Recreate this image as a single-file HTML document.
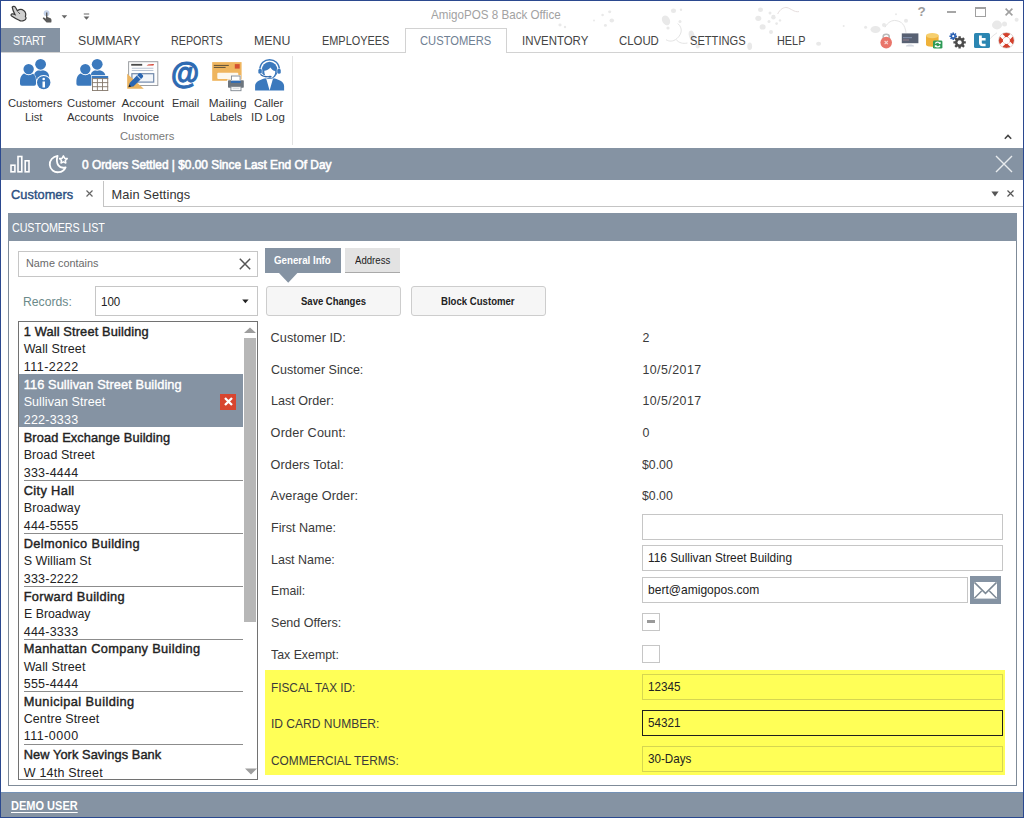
<!DOCTYPE html>
<html>
<head>
<meta charset="utf-8">
<title>AmigoPOS 8 Back Office</title>
<style>
*{box-sizing:border-box;margin:0;padding:0}
html,body{width:1024px;height:818px;overflow:hidden;background:#fff;font-family:"Liberation Sans",sans-serif;color:#222}
.a{position:absolute}
.t{position:absolute;white-space:nowrap;line-height:1;transform-origin:0 0}
svg{position:absolute;overflow:visible}
</style>
</head>
<body>
<!-- window frame -->
<div class="a" style="left:0;top:0;width:1024px;height:818px;border:1px solid #2b498f"></div>

<!-- title bar decoration -->
<svg id="deco" style="left:0;top:0" width="1024" height="53" viewBox="0 0 1024 53">
<g fill="#e9e9e9" stroke="none">
<ellipse cx="594" cy="20.4" rx="1" ry="1"/><ellipse cx="602.6" cy="15" rx="1.3" ry="1.3"/><ellipse cx="609.7" cy="11.8" rx="1.6" ry="1.4"/><ellipse cx="611.8" cy="20.4" rx="2.3" ry="2"/><ellipse cx="605.4" cy="25.4" rx="1.5" ry="1.4"/><ellipse cx="673.5" cy="10.7" rx="2.6" ry="2.2"/><ellipse cx="681" cy="9.7" rx="1.2" ry="1.2"/><ellipse cx="668" cy="28" rx="1.6" ry="1.6"/><ellipse cx="680" cy="21.5" rx="1.5" ry="1.5"/><ellipse cx="697.7" cy="46.2" rx="2" ry="2.2"/><ellipse cx="749.7" cy="46.2" rx="2.4" ry="3.8"/><ellipse cx="760.5" cy="9.7" rx="2.5" ry="2.2"/><ellipse cx="758.3" cy="18.3" rx="3" ry="2.6"/><ellipse cx="762.6" cy="26.9" rx="3" ry="2.6"/><ellipse cx="770" cy="12.9" rx="1.5" ry="1.5"/><ellipse cx="773.4" cy="17.2" rx="2.2" ry="2.4"/><ellipse cx="769" cy="21.5" rx="1.5" ry="1.5"/><ellipse cx="776.6" cy="23.6" rx="1.3" ry="1.3"/><ellipse cx="771" cy="32" rx="2" ry="2"/><ellipse cx="780" cy="20.4" rx="1.2" ry="1.2"/><ellipse cx="875.5" cy="29.5" rx="5" ry="3.5"/><ellipse cx="865.6" cy="27.3" rx="1.5" ry="1.5"/><ellipse cx="884" cy="25" rx="2" ry="2"/><ellipse cx="906" cy="20.8" rx="2" ry="2"/><ellipse cx="896" cy="14.2" rx="1" ry="1"/><ellipse cx="997" cy="25" rx="5" ry="4.4"/><ellipse cx="1004.5" cy="24" rx="2.5" ry="2.5"/><ellipse cx="1016.6" cy="19.7" rx="2" ry="2"/><ellipse cx="818.6" cy="43.7" rx="2.5" ry="2"/><ellipse cx="843.7" cy="26" rx="1" ry="1"/><ellipse cx="560" cy="25" rx="1.6" ry="1.4"/><ellipse cx="565" cy="27" rx="1.2" ry="1.2"/>
<ellipse cx="666" cy="20.4" rx="3.8" ry="5.2" transform="rotate(-30 666 20.4)"/>
<ellipse cx="691.7" cy="35.5" rx="2.8" ry="5" transform="rotate(-15 691.7 35.5)"/>
</g>
<g fill="none" stroke="#e4e4e4" stroke-width="1">
<path d="M677.8 23.6 C683 28 682 34 677 38.5 C673 42 669 41.5 666 39.7"/>
<path d="M676 39.5 C679 43 683 44 687.4 43"/>
<path d="M777.7 14 C780 9 784 7 787 7.6 C791 8.4 794 12.5 799 11.6" stroke="#e6dede"/>
<path d="M885 27.3 C888 22 892 20 896 20.6 C902 21.5 905 25 906 32.8"/>
<path d="M986 43.7 C989 39 993 35.5 997 32.8"/>
</g>
</svg>

<!-- quick access icons -->
<svg style="left:10px;top:5px" width="18" height="18" viewBox="0 0 18 18">
<path d="M2.2 2.2 C3.2 0.8 5 1.2 5.6 2.6 L7.4 5.8 C9 4.6 11.6 4 13.6 5.4 C15.6 6.8 16 9.6 15.4 11.6 C16.6 12.6 16 14.6 14.4 15.2 C12.8 16 10.4 16.2 9.2 15.2 C7 14.2 3.6 12.4 1.6 11 C0.4 10.2 1.2 8.6 2.6 8.8 L5 9.6 C3.8 7.4 2.6 5.2 2.2 2.2 Z" fill="#d0d0d0" stroke="#383838" stroke-width="1.2"/>
<path d="M8 6.8 L10 9" stroke="#444" stroke-width="0.9" fill="none"/>
</svg>
<svg style="left:42px;top:10px" width="11" height="14" viewBox="0 0 11 14">
<circle cx="4.6" cy="3.2" r="2.9" fill="#c5d3ea"/>
<path d="M4 2.6 L5.4 2.6 L5.4 7 L8.6 8.2 C9.6 8.8 9.8 10.6 9.2 12.6 L4.6 12.6 L0.8 8.6 C0.6 7.6 1.6 7.2 2.4 7.8 L4 8.8 Z" fill="#5a5a5a"/>
</svg>
<svg style="left:61px;top:15px" width="7" height="4" viewBox="0 0 7 4"><path d="M0.6 0.2 L6.2 0.2 L3.4 3.4 Z" fill="#666"/></svg>
<svg style="left:83px;top:13px" width="7" height="8" viewBox="0 0 7 8"><path d="M0.8 0.4 H6.2 V1.6 H0.8 Z M0.6 3.4 L6.4 3.4 L3.5 6.8 Z" fill="#666"/></svg>

<!-- window controls -->
<div class="t" style="left:917.6px;top:5.4px;font-size:13.4px;font-weight:bold;color:#9c9c9c">?</div>
<div class="a" style="left:947px;top:11px;width:9px;height:2px;background:#a6a6a6"></div>
<div class="a" style="left:975px;top:7px;width:11px;height:10px;border:1px solid #a0a0a0;border-top-width:2px"></div>
<svg style="left:1005px;top:8px" width="8" height="8" viewBox="0 0 8 8"><path d="M0.6 0.6 L7.4 7.4 M7.4 0.6 L0.6 7.4" stroke="#a0a0a0" stroke-width="1.6"/></svg>

<!-- small right icons -->
<!-- lock -->
<svg style="left:880px;top:32px" width="13" height="17" viewBox="0 0 13 17">
<path d="M3.2 7 V4.6 C3.2 1.4 9.2 1.4 9.2 4.6 V7" fill="none" stroke="#b9b9b9" stroke-width="1.6"/>
<circle cx="6.2" cy="10.6" r="5.8" fill="#e9756a"/>
<path d="M4.6 9 L7.8 12.2 M7.8 9 L4.6 12.2" stroke="#f8d6d2" stroke-width="1.1"/>
</svg>
<!-- monitor -->
<svg style="left:901px;top:33px" width="18" height="15" viewBox="0 0 18 15">
<rect x="0.8" y="0.4" width="16.6" height="9.8" fill="#586173"/>
<rect x="2" y="4" width="9" height="1.2" fill="#7d8aa5"/><rect x="2" y="6.4" width="6" height="1.2" fill="#8a7a86"/>
<path d="M5 12.6 C7 11 11 11 13 12.6 L13 13.6 L5 13.6 Z" fill="#d5dae2"/>
</svg>
<!-- database -->
<svg style="left:925px;top:32px" width="18" height="17" viewBox="0 0 18 17">
<path d="M1 3.6 V12.8 C1 15.4 13.6 15.4 13.6 12.8 V3.6 Z" fill="#efb23a"/>
<ellipse cx="7.3" cy="3.6" rx="6.3" ry="2.6" fill="#f6cf6e"/>
<rect x="8" y="8.4" width="9.4" height="8.2" rx="1.4" fill="#2f9b57"/>
<path d="M10.4 11.6 C11 9.8 14 9.6 15 11.4 M15 13.6 C14.2 15.2 11.4 15.4 10.4 13.8" fill="none" stroke="#fff" stroke-width="1.3"/>
<path d="M15.6 9.8 V12 H13.4 Z M9.8 15.4 V13.2 H12 Z" fill="#fff"/>
</svg>
<!-- gears -->
<svg style="left:949px;top:32px" width="18" height="17" viewBox="0 0 18 17">
<g fill="#2e63b4"><circle cx="4.2" cy="4.2" r="2.6"/><path d="M3.4 0.4h1.6v7.6H3.4z M0.4 3.4h7.6v1.6H0.4z"/><path d="M1 2.1L2.1 1l5.4 5.4L6.4 7.5z M6.4 1l1.1 1.1L2.1 7.5 1 6.4z"/></g>
<circle cx="4.2" cy="4.2" r="1.1" fill="#fff"/>
<g fill="#4b4b4b"><circle cx="10.6" cy="10.4" r="4.6"/><path d="M9.4 4.2h2.4v12.4H9.4z M4.4 9.2h12.4v2.4H4.4z"/><path d="M5.4 6.9L7.1 5.2l8.8 8.8-1.7 1.7z M14.2 5.2l1.7 1.7-8.8 8.8-1.7-1.7z"/></g>
<circle cx="10.6" cy="10.4" r="2.1" fill="#fff"/>
</svg>
<!-- twitter -->
<svg style="left:974px;top:33px" width="16" height="15" viewBox="0 0 16 15">
<rect x="0" y="0" width="16" height="15" rx="1.6" fill="#2b86b2"/>
<path d="M5 2.4 H7.8 V5 H11.6 V7.6 H7.8 V9.4 C7.8 10.4 8.4 10.8 9.4 10.8 H11.6 V13.2 H8.6 C6.2 13.2 5 12 5 9.8 Z" fill="#fff"/>
</svg>
<!-- lifebuoy -->
<svg style="left:998px;top:32px" width="17" height="17" viewBox="0 0 17 17">
<circle cx="8.4" cy="8.4" r="5.6" fill="none" stroke="#d4412d" stroke-width="4.2"/>
<g stroke="#fff" stroke-width="3.6" transform="rotate(45 8.4 8.4)"><path d="M8.4 0.4V4.8 M8.4 12V16.4 M0.4 8.4H4.8 M12 8.4H16.4"/></g>
<circle cx="8.4" cy="8.4" r="7.8" fill="none" stroke="#c7b3ae" stroke-width="0.5"/>
</svg>

<!-- ribbon tab row -->
<div class="a" style="left:1px;top:28px;width:59px;height:25px;background:#8593a3"></div>
<div class="a" style="left:1px;top:52px;width:1022px;height:1px;background:#d2d2d2"></div>
<div class="a" style="left:405px;top:28px;width:102px;height:25px;border:1px solid #d2d2d2;border-bottom:none;background:#fff"></div>

<!-- ribbon icons -->
<!-- customers list -->
<svg style="left:19px;top:58px" width="33" height="33" viewBox="0 0 33 33">
<path d="M15 21.4 L15 18.6 C15 14.4 17.6 12.1 21.6 12.1 C26.4 12.1 30.2 14.4 30.2 19.4 L30.2 21.4 Z" fill="#3b79bd"/>
<circle cx="21.6" cy="6.3" r="6.4" fill="#fff"/>
<circle cx="21.6" cy="6.3" r="5.4" fill="#3b79bd"/>
<path d="M1 25.8 L1 23 C1 17.6 4.2 14.4 9.65 14.4 C14.6 14.4 17 17.6 17 23 L17 25.8 Q17 27.7 15.2 27.7 L2.8 27.7 Q1 27.7 1 25.8 Z" fill="#3b79bd" stroke="#fff" stroke-width="1" paint-order="stroke"/>
<circle cx="9.65" cy="11.1" r="6.2" fill="#fff"/>
<circle cx="9.65" cy="11.1" r="5.2" fill="#3b79bd"/>
<circle cx="24.7" cy="24.6" r="7.7" fill="#fff"/>
<circle cx="24.7" cy="24.6" r="6.7" fill="#3b79bd"/>
<rect x="23.5" y="23.5" width="2.5" height="6" fill="#fff"/><circle cx="24.7" cy="21" r="1.3" fill="#fff"/>
</svg>
<!-- customer accounts -->
<svg style="left:76px;top:58px" width="33" height="33" viewBox="0 0 33 33">
<path d="M14.6 21.4 L14.6 18.6 C14.6 14.4 17.2 12.1 21.2 12.1 C26 12.1 29.6 14.4 29.6 19.4 L29.6 21.4 Z" fill="#3b79bd"/>
<circle cx="21.2" cy="6.3" r="6.4" fill="#fff"/>
<circle cx="21.2" cy="6.3" r="5.4" fill="#3b79bd"/>
<path d="M0.4 25.8 L0.4 23 C0.4 17.6 3.6 14.4 9.3 14.4 C14.2 14.4 16.6 17.6 16.6 23 L16.6 25.8 Q16.6 27.7 14.8 27.7 L2.2 27.7 Q0.4 27.7 0.4 25.8 Z" fill="#3b79bd" stroke="#fff" stroke-width="1" paint-order="stroke"/>
<circle cx="9.3" cy="11.1" r="6.2" fill="#fff"/>
<circle cx="9.3" cy="11.1" r="5.2" fill="#3b79bd"/>
<rect x="15.4" y="17.2" width="17.4" height="16.2" fill="#fff"/>
<rect x="16.4" y="18" width="15.6" height="14.6" fill="#fff"/>
<rect x="16" y="18" width="16.2" height="2.6" fill="#3b79bd"/>
<path d="M16.5 20.4V32.9 M21.4 20.4V32.9 M26.5 20.4V32.9 M31.7 20.4V32.9 M16 20.6H32.2 M16 24.6H32.2 M16 28.7H32.2 M16 32.5H32.2" stroke="#85786c" stroke-width="0.9" fill="none"/>
</svg>
<!-- account invoice -->
<svg style="left:127px;top:60px" width="32" height="30" viewBox="0 0 32 30">
<rect x="1.6" y="1.7" width="29.2" height="23.8" fill="#fdfdfd" stroke="#9c9fa3" stroke-width="1"/>
<rect x="4.2" y="3.9" width="11" height="1.8" fill="#4a4a4a"/>
<path d="M19.6 5.6 L21.2 4.4 L27 3.9 L26.4 5.6 Z" fill="#d13a2a"/>
<rect x="4.8" y="7.8" width="21.6" height="0.8" fill="#a9b6c8"/>
<rect x="4.8" y="10" width="21.6" height="0.8" fill="#a9b6c8"/>
<rect x="4.9" y="13.7" width="21.8" height="8.4" fill="#f3f6fa" stroke="#7189ab" stroke-width="1.2"/>
<path d="M0.2 13.8 L0.2 28.8 L16.8 28.8 Z" fill="#ebb460"/>
<path d="M1.6 27 L2.6 23 L11.8 13.6 C12.6 12.8 13.4 12.8 14.2 13.6 L15.6 15 C16.4 15.8 16.4 16.6 15.6 17.4 L6.4 26.4 Z" fill="#2a66b2"/>
<path d="M10.2 15.6 L13.8 19.2" stroke="#fff" stroke-width="1"/>
<path d="M1.5 27.2 L2.2 24.4 L4.4 26.6 Z" fill="#222"/>
</svg>
<!-- email @ -->
<div class="t" style="left:171.2px;top:58px;font-size:31px;font-weight:bold;color:#2e6ab2;-webkit-text-stroke:1.1px #2e6ab2;transform:scaleX(0.93)">@</div>
<!-- mailing labels -->
<svg style="left:212px;top:62px" width="33" height="30" viewBox="0 0 33 30">
<rect x="0.2" y="0.1" width="29.4" height="18.7" fill="#efb55e"/>
<rect x="22.8" y="2.1" width="4.9" height="4.5" fill="#d5502f"/>
<rect x="1.8" y="2.9" width="15" height="1.1" fill="#6b5a3c"/><rect x="1.8" y="4.9" width="11.8" height="1.1" fill="#6b5a3c"/>
<rect x="5.3" y="10.8" width="21" height="6.2" rx="1" fill="#fdf8ee"/>
<rect x="15.2" y="13.2" width="17.4" height="16.3" fill="#fff" opacity="0.0"/>
<path d="M18.6 13.2 H28.9 V17.4 H32.6 V26.6 H29.8 V29.5 H18.1 V26.6 H15.2 V17.4 H18.6 Z" fill="#fff"/>
<rect x="19.4" y="14" width="8.7" height="4.6" fill="#fff" stroke="#7d858e" stroke-width="0.9"/>
<rect x="16" y="18.2" width="15.8" height="7.6" rx="0.8" fill="#6d757e"/>
<rect x="18.9" y="18.6" width="9.7" height="2.3" fill="#2f6cb5"/>
<rect x="18.9" y="18" width="9.7" height="0.7" fill="#dfe8f4"/>
<rect x="18.9" y="24.7" width="10.1" height="4" fill="#fff" stroke="#7d858e" stroke-width="0.9"/>
<path d="M20.6 26.7H27.4" stroke="#c3c8cf" stroke-width="0.8"/>
</svg>
<!-- caller id -->
<svg style="left:254px;top:58px" width="32" height="33" viewBox="0 0 32 33">
<path d="M1.1 32.5 L1.1 28 C1.1 23.6 6 21.6 11.4 20.2 L15.6 23.4 L19.8 20.2 C25.2 21.6 30.1 23.6 30.1 28 L30.1 32.5 Z" fill="#3b79bd"/>
<path d="M12.2 20.6 L15.6 32.6 L19 20.6 L15.6 22.4 Z" fill="#fff"/>
<g transform="translate(0,0.8)">
<path d="M5.8 11.4 C5.8 -2.6 25.4 -2.6 25.4 11.4" fill="none" stroke="#3b79bd" stroke-width="1.5"/>
<ellipse cx="15.6" cy="11.6" rx="7.9" ry="8.7" fill="#3b79bd"/>
<path d="M10.3 12 C12.6 11.6 15 10.2 16.4 8.6 C17.6 10.6 19.4 11.8 21.2 12.2 C21.5 16.2 19 19.4 15.8 19.4 C12.6 19.4 10.1 16.2 10.3 12 Z" fill="#fff"/>
<rect x="4.1" y="9.6" width="4" height="5.6" rx="1.8" fill="#3b79bd" stroke="#fff" stroke-width="0.5"/>
<rect x="23" y="9.6" width="4" height="5.6" rx="1.8" fill="#3b79bd" stroke="#fff" stroke-width="0.5"/>
<path d="M6.6 15 C7 17.2 9 17.9 15.4 18" fill="none" stroke="#fff" stroke-width="2.6"/>
<path d="M6.6 15 C7 17.2 9 17.9 15.4 18" fill="none" stroke="#2f66a8" stroke-width="1.1"/>
<ellipse cx="16" cy="18" rx="1.7" ry="1" fill="#2f66a8"/>
</g>
</svg>
<div class="a" style="left:292px;top:56px;width:1px;height:89px;background:#e2e2e2"></div>
<!-- ribbon collapse chevron -->
<svg style="left:1004px;top:133.5px" width="8" height="6" viewBox="0 0 8 6"><path d="M0.8 4.8 L4 1.4 L7.2 4.8" fill="none" stroke="#444" stroke-width="1.5"/></svg>

<!-- status band -->
<div class="a" style="left:1px;top:147.5px;width:1022px;height:32.5px;background:#8593a3"></div>
<svg style="left:10px;top:155px" width="22" height="19" viewBox="0 0 22 19">
<g fill="none" stroke="#fff" stroke-width="1.6">
<rect x="1" y="10.2" width="3.9" height="6.6"/><rect x="8" y="1.5" width="3.8" height="15.3"/><rect x="15.2" y="5.8" width="3.8" height="11"/>
</g></svg>
<svg style="left:48px;top:154px" width="22" height="20" viewBox="0 0 22 20">
<path d="M9.6 1.8 C4.6 2.6 1.4 6.4 1.8 11 C2.2 15.6 6.2 18.6 10.6 18.2 C13.8 18 16.4 16.2 17.6 13.4 C11.4 15 7.2 10.2 9.6 1.8 Z" fill="none" stroke="#fff" stroke-width="1.8" stroke-linejoin="round"/>
<path d="M15.4 1.8 L16.6 4.2 L19.2 4.6 L17.3 6.4 L17.8 9 L15.4 7.8 L13 9 L13.5 6.4 L11.6 4.6 L14.2 4.2 Z" fill="none" stroke="#fff" stroke-width="1.5" stroke-linejoin="round"/>
</svg>
<svg style="left:995px;top:155px" width="18" height="18" viewBox="0 0 18 18"><path d="M1 1 L17 17 M17 1 L1 17" stroke="#e8ebee" stroke-width="1.4"/></svg>

<!-- document tab strip -->
<svg style="left:86px;top:190px" width="7" height="7" viewBox="0 0 7 7"><path d="M0.5 0.5 L6.5 6.5 M6.5 0.5 L0.5 6.5" stroke="#666" stroke-width="1.2"/></svg>
<div class="a" style="left:103px;top:181px;width:1px;height:26px;background:#c4c4c4"></div>
<div class="a" style="left:103px;top:206px;width:920px;height:1px;background:#c4c4c4"></div>
<svg style="left:991px;top:191px" width="8" height="6" viewBox="0 0 8 6"><path d="M0.4 0.6 H7.6 L4 5.4 Z" fill="#555"/></svg>
<svg style="left:1007px;top:190px" width="7" height="7" viewBox="0 0 7 7"><path d="M0.5 0.5 L6.5 6.5 M6.5 0.5 L0.5 6.5" stroke="#555" stroke-width="1.2"/></svg>

<!-- main panel -->
<div class="a" style="left:7.5px;top:213px;width:1009px;height:573px;border:1px solid #7f8b98;background:#fff"></div>
<div class="a" style="left:7.5px;top:213px;width:1009px;height:28px;background:#8593a3"></div>

<!-- search + records -->
<div class="a" style="left:18px;top:251px;width:240px;height:26px;border:1px solid #c6c6c6;background:#fff"></div>
<svg style="left:239px;top:257.5px" width="12" height="12" viewBox="0 0 12 12"><path d="M0.8 0.8 L11.2 11.2 M11.2 0.8 L0.8 11.2" stroke="#555" stroke-width="1.5"/></svg>
<div class="a" style="left:95px;top:286px;width:163px;height:30px;border:1px solid #c6c6c6;background:#fff"></div>
<svg style="left:242px;top:299px" width="7" height="5" viewBox="0 0 7 5"><path d="M0.2 0.4 H6.6 L3.4 4.2 Z" fill="#222"/></svg>

<!-- list box -->
<div class="a" style="left:18px;top:321px;width:240px;height:459px;border:1px solid #727272;background:#fff"></div>
<div class="a" style="left:19px;top:374.4px;width:224px;height:53px;background:#8593a3"></div>
<div class="a" style="left:24px;top:480px;width:219px;height:1px;background:#8c8c8c"></div>
<div class="a" style="left:24px;top:533px;width:219px;height:1px;background:#8c8c8c"></div>
<div class="a" style="left:24px;top:586px;width:219px;height:1px;background:#8c8c8c"></div>
<div class="a" style="left:24px;top:639px;width:219px;height:1px;background:#8c8c8c"></div>
<div class="a" style="left:24px;top:691px;width:219px;height:1px;background:#8c8c8c"></div>
<div class="a" style="left:24px;top:744px;width:219px;height:1px;background:#8c8c8c"></div>
<!-- delete button -->
<div class="a" style="left:220px;top:393.5px;width:16px;height:16px;background:#d8452f"></div>
<svg style="left:223.5px;top:397px" width="9" height="9" viewBox="0 0 9 9"><path d="M1 1 L8 8 M8 1 L1 8" stroke="#fff" stroke-width="2.3"/></svg>
<!-- scrollbar -->
<svg style="left:244px;top:327px" width="12" height="7" viewBox="0 0 12 7"><path d="M0 6 L6 0.4 L12 6 Z" fill="#9e9e9e"/></svg>
<div class="a" style="left:244px;top:338px;width:12px;height:283.5px;background:#b7b7b7"></div>
<svg style="left:244.5px;top:767.5px" width="12" height="7" viewBox="0 0 12 7"><path d="M0 0.6 L12 0.6 L6 6.4 Z" fill="#9e9e9e"/></svg>

<!-- sub tabs -->
<div class="a" style="left:265px;top:248px;width:76px;height:25px;background:#8593a3"></div>
<svg style="left:279px;top:272.5px" width="19" height="10" viewBox="0 0 19 10"><path d="M0 0 H18.4 L9.2 9.8 Z" fill="#8593a3"/></svg>
<div class="a" style="left:345px;top:248px;width:55px;height:25px;background:#e3e3e3;border-bottom:1px solid #a9a9a9"></div>
<!-- buttons -->
<div class="a" style="left:266px;top:286px;width:135px;height:30px;border:1px solid #cdcdcd;border-radius:3px;background:#f6f6f6"></div>
<div class="a" style="left:411px;top:286px;width:135px;height:30px;border:1px solid #cdcdcd;border-radius:3px;background:#f6f6f6"></div>

<!-- inputs -->
<div class="a" style="left:642px;top:514px;width:361px;height:26px;border:1px solid #c6c6c6;background:#fff"></div>
<div class="a" style="left:642px;top:545px;width:361px;height:26px;border:1px solid #c6c6c6;background:#fff"></div>
<div class="a" style="left:642px;top:577px;width:326px;height:26px;border:1px solid #c6c6c6;background:#fff"></div>
<div class="a" style="left:970px;top:576px;width:31px;height:28px;background:#8593a3"></div>
<svg style="left:974px;top:581.6px" width="23" height="17" viewBox="0 0 23 17">
<rect x="0" y="0" width="23" height="16.6" fill="#fff"/>
<path d="M0.4 0.4 L11.5 11.4 L22.6 0.4 M0.4 16.2 L7.6 9 M22.6 16.2 L15.4 9" fill="none" stroke="#7d8995" stroke-width="1.5"/>
</svg>
<div class="a" style="left:642px;top:613px;width:18px;height:18px;border:1px solid #c6c6c6;background:#fff"></div>
<div class="a" style="left:647px;top:620px;width:8px;height:3px;background:#9a9a9a"></div>
<div class="a" style="left:642px;top:644.5px;width:18px;height:18px;border:1px solid #c6c6c6;background:#fff"></div>

<!-- highlighted area -->
<div class="a" style="left:264.5px;top:670px;width:740px;height:104.5px;background:#ffff57"></div>
<div class="a" style="left:642px;top:674px;width:361px;height:26px;border:1px solid #d6d650;background:#ffff57"></div>
<div class="a" style="left:642px;top:710px;width:361px;height:26px;border:1px solid #1e1e1e;background:#ffff57"></div>
<div class="a" style="left:642px;top:746px;width:361px;height:26px;border:1px solid #d6d650;background:#ffff57"></div>

<!-- bottom status bar -->
<div class="a" style="left:1px;top:791.5px;width:1022px;height:25.5px;background:#8593a3;border-top:1px solid #7391b6"></div>

<div class="t" style="left:431.0px;top:9.0px;font-size:12.6px;color:#a2a2a2;transform:scaleX(0.9233);">AmigoPOS 8 Back Office</div>
<div class="t" style="left:12.9px;top:35.0px;font-size:12.8px;color:#fff;letter-spacing:-0.489px;transform:scaleX(0.8400);">START</div>
<div class="t" style="left:78.4px;top:35.0px;font-size:12.8px;color:#444;transform:scaleX(0.9557);">SUMMARY</div>
<div class="t" style="left:171.4px;top:35.0px;font-size:12.8px;color:#444;transform:scaleX(0.8404);">REPORTS</div>
<div class="t" style="left:253.9px;top:35.0px;font-size:12.8px;color:#444;transform:scaleX(0.9632);">MENU</div>
<div class="t" style="left:321.9px;top:35.0px;font-size:12.8px;color:#444;transform:scaleX(0.8524);">EMPLOYEES</div>
<div class="t" style="left:419.9px;top:35.0px;font-size:12.8px;color:#6f8093;transform:scaleX(0.8745);">CUSTOMERS</div>
<div class="t" style="left:522.4px;top:35.0px;font-size:12.8px;color:#444;transform:scaleX(0.8935);">INVENTORY</div>
<div class="t" style="left:619.4px;top:35.0px;font-size:12.8px;color:#444;transform:scaleX(0.8885);">CLOUD</div>
<div class="t" style="left:690.1px;top:35.0px;font-size:12.8px;color:#444;transform:scaleX(0.8687);">SETTINGS</div>
<div class="t" style="left:776.8px;top:35.0px;font-size:12.8px;color:#444;transform:scaleX(0.8493);">HELP</div>
<div class="t" style="left:8.2px;top:98.0px;font-size:11.8px;color:#333;transform:scaleX(0.9518);">Customers</div>
<div class="t" style="left:25.4px;top:112.0px;font-size:11.8px;color:#333;transform:scaleX(0.9423);">List</div>
<div class="t" style="left:67.4px;top:98.0px;font-size:11.8px;color:#333;transform:scaleX(0.9542);">Customer</div>
<div class="t" style="left:67.4px;top:112.0px;font-size:11.8px;color:#333;transform:scaleX(0.9643);">Accounts</div>
<div class="t" style="left:121.4px;top:98.0px;font-size:11.8px;color:#333;">Account</div>
<div class="t" style="left:123.4px;top:112.0px;font-size:11.8px;color:#333;transform:scaleX(0.9628);">Invoice</div>
<div class="t" style="left:172.4px;top:98.0px;font-size:11.8px;color:#333;transform:scaleX(0.9220);">Email</div>
<div class="t" style="left:208.7px;top:98.0px;font-size:11.8px;color:#333;letter-spacing:0.087px;">Mailing</div>
<div class="t" style="left:210.2px;top:112.0px;font-size:11.8px;color:#333;transform:scaleX(0.9233);">Labels</div>
<div class="t" style="left:254.4px;top:98.0px;font-size:11.8px;color:#333;transform:scaleX(0.9509);">Caller</div>
<div class="t" style="left:250.8px;top:112.0px;font-size:11.8px;color:#333;transform:scaleX(0.9722);">ID Log</div>
<div class="t" style="left:120.2px;top:131.0px;font-size:11.8px;color:#7a7a7a;transform:scaleX(0.9536);">Customers</div>
<div class="t" style="left:81.7px;top:159.0px;font-size:12.6px;color:#fff;transform:scaleX(0.9437);-webkit-text-stroke:0.6px #fff;">0 Orders Settled | $0.00 Since Last End Of Day</div>
<div class="t" style="left:11.0px;top:189.0px;font-size:12.8px;color:#2b4f81;letter-spacing:0.041px;-webkit-text-stroke:0.4px #2b4f81;">Customers</div>
<div class="t" style="left:111.6px;top:189.0px;font-size:12.8px;color:#333;letter-spacing:0.089px;">Main Settings</div>
<div class="t" style="left:12.1px;top:222.0px;font-size:12.8px;color:#fff;letter-spacing:-0.127px;transform:scaleX(0.8400);">CUSTOMERS LIST</div>
<div class="t" style="left:25.8px;top:258.0px;font-size:11px;color:#6a6a6a;transform:scaleX(0.9867);">Name contains</div>
<div class="t" style="left:22.6px;top:296.0px;font-size:12.8px;color:#6b8a8a;transform:scaleX(0.9528);">Records:</div>
<div class="t" style="left:101.4px;top:296.0px;font-size:12.2px;color:#222;transform:scaleX(0.9487);">100</div>
<div class="t" style="left:274.1px;top:256.0px;font-size:10.4px;color:#fff;transform:scaleX(0.9369);font-weight:bold;">General Info</div>
<div class="t" style="left:354.9px;top:255.0px;font-size:10.5px;color:#222;transform:scaleX(0.9161);">Address</div>
<div class="t" style="left:300.7px;top:297.0px;font-size:10.4px;color:#222;transform:scaleX(0.9149);font-weight:bold;">Save Changes</div>
<div class="t" style="left:441.4px;top:297.0px;font-size:10.4px;color:#222;transform:scaleX(0.9236);font-weight:bold;">Block Customer</div>
<div class="t" style="left:270.6px;top:332.0px;font-size:12.7px;color:#3a3a3a;letter-spacing:0.042px;">Customer ID:</div>
<div class="t" style="left:270.6px;top:364.0px;font-size:12.7px;color:#3a3a3a;transform:scaleX(0.9842);">Customer Since:</div>
<div class="t" style="left:270.6px;top:395.0px;font-size:12.7px;color:#3a3a3a;transform:scaleX(0.9910);">Last Order:</div>
<div class="t" style="left:270.6px;top:427.0px;font-size:12.7px;color:#3a3a3a;letter-spacing:0.169px;">Order Count:</div>
<div class="t" style="left:270.6px;top:459.0px;font-size:12.7px;color:#3a3a3a;letter-spacing:0.066px;">Orders Total:</div>
<div class="t" style="left:270.6px;top:490.0px;font-size:12.7px;color:#3a3a3a;letter-spacing:0.068px;">Average Order:</div>
<div class="t" style="left:270.6px;top:522.0px;font-size:12.7px;color:#3a3a3a;transform:scaleX(0.9899);">First Name:</div>
<div class="t" style="left:270.6px;top:554.0px;font-size:12.7px;color:#3a3a3a;transform:scaleX(0.9834);">Last Name:</div>
<div class="t" style="left:270.6px;top:585.0px;font-size:12.7px;color:#3a3a3a;transform:scaleX(0.9674);">Email:</div>
<div class="t" style="left:270.6px;top:617.0px;font-size:12.7px;color:#3a3a3a;transform:scaleX(0.9901);">Send Offers:</div>
<div class="t" style="left:270.6px;top:649.0px;font-size:12.7px;color:#3a3a3a;transform:scaleX(0.9726);">Tax Exempt:</div>
<div class="t" style="left:270.6px;top:682.0px;font-size:12.7px;color:#3a3a3a;transform:scaleX(0.9303);">FISCAL TAX ID:</div>
<div class="t" style="left:270.6px;top:718.0px;font-size:12.7px;color:#3a3a3a;transform:scaleX(0.9483);">ID CARD NUMBER:</div>
<div class="t" style="left:270.6px;top:755.0px;font-size:12.7px;color:#3a3a3a;transform:scaleX(0.9344);">COMMERCIAL TERMS:</div>
<div class="t" style="left:642.4px;top:332.0px;font-size:12.4px;color:#3a3a3a;">2</div>
<div class="t" style="left:642.4px;top:364.0px;font-size:12.4px;color:#3a3a3a;letter-spacing:0.459px;">10/5/2017</div>
<div class="t" style="left:642.4px;top:395.0px;font-size:12.4px;color:#3a3a3a;letter-spacing:0.459px;">10/5/2017</div>
<div class="t" style="left:642.4px;top:427.0px;font-size:12.4px;color:#3a3a3a;">0</div>
<div class="t" style="left:642.4px;top:459.0px;font-size:12.4px;color:#3a3a3a;transform:scaleX(0.9930);">$0.00</div>
<div class="t" style="left:642.4px;top:490.0px;font-size:12.4px;color:#3a3a3a;transform:scaleX(0.9930);">$0.00</div>
<div class="t" style="left:647.8px;top:552.0px;font-size:12.2px;color:#222;transform:scaleX(0.9719);">116 Sullivan Street Building</div>
<div class="t" style="left:647.8px;top:584.0px;font-size:12.2px;color:#222;transform:scaleX(0.9881);">bert@amigopos.com</div>
<div class="t" style="left:647.8px;top:681.0px;font-size:12.2px;color:#222;transform:scaleX(0.9560);">12345</div>
<div class="t" style="left:647.8px;top:717.0px;font-size:12.2px;color:#222;transform:scaleX(0.9560);">54321</div>
<div class="t" style="left:647.8px;top:753.0px;font-size:12.2px;color:#222;transform:scaleX(0.9561);">30-Days</div>
<div class="t" style="left:11.2px;top:800.0px;font-size:12px;color:#fff;transform:scaleX(0.9176);font-weight:bold;text-decoration:underline;text-underline-offset:1.5px;">DEMO USER</div>
<div class="t" style="left:23.7px;top:326.0px;font-size:12.8px;color:#222;letter-spacing:0.144px;-webkit-text-stroke:0.4px #222;">1 Wall Street Building</div>
<div class="t" style="left:23.7px;top:343.0px;font-size:12.5px;color:#222;letter-spacing:0.103px;">Wall Street</div>
<div class="t" style="left:23.7px;top:361.0px;font-size:12.5px;color:#222;letter-spacing:0.502px;">111-2222</div>
<div class="t" style="left:23.7px;top:379.0px;font-size:12.8px;color:#fff;letter-spacing:0.090px;-webkit-text-stroke:0.4px #fff;">116 Sullivan Street Building</div>
<div class="t" style="left:23.7px;top:396.0px;font-size:12.5px;color:#fff;letter-spacing:0.064px;">Sullivan Street</div>
<div class="t" style="left:23.7px;top:414.0px;font-size:12.5px;color:#fff;letter-spacing:0.239px;">222-3333</div>
<div class="t" style="left:23.7px;top:432.0px;font-size:12.8px;color:#222;letter-spacing:0.126px;-webkit-text-stroke:0.4px #222;">Broad Exchange Building</div>
<div class="t" style="left:23.7px;top:449.0px;font-size:12.5px;color:#222;letter-spacing:0.074px;">Broad Street</div>
<div class="t" style="left:23.7px;top:467.0px;font-size:12.5px;color:#222;letter-spacing:0.239px;">333-4444</div>
<div class="t" style="left:23.7px;top:485.0px;font-size:12.8px;color:#222;letter-spacing:0.357px;-webkit-text-stroke:0.4px #222;">City Hall</div>
<div class="t" style="left:23.7px;top:502.0px;font-size:12.5px;color:#222;letter-spacing:0.129px;">Broadway</div>
<div class="t" style="left:23.7px;top:520.0px;font-size:12.5px;color:#222;letter-spacing:0.239px;">444-5555</div>
<div class="t" style="left:23.7px;top:538.0px;font-size:12.8px;color:#222;letter-spacing:0.380px;-webkit-text-stroke:0.4px #222;">Delmonico Building</div>
<div class="t" style="left:23.7px;top:555.0px;font-size:12.5px;color:#222;letter-spacing:0.011px;">S William St</div>
<div class="t" style="left:23.7px;top:573.0px;font-size:12.5px;color:#222;letter-spacing:0.239px;">333-2222</div>
<div class="t" style="left:23.7px;top:591.0px;font-size:12.8px;color:#222;letter-spacing:0.331px;-webkit-text-stroke:0.4px #222;">Forward Building</div>
<div class="t" style="left:23.7px;top:608.0px;font-size:12.5px;color:#222;transform:scaleX(0.9866);">E Broadway</div>
<div class="t" style="left:23.7px;top:626.0px;font-size:12.5px;color:#222;letter-spacing:0.239px;">444-3333</div>
<div class="t" style="left:23.7px;top:643.0px;font-size:12.8px;color:#222;letter-spacing:0.344px;-webkit-text-stroke:0.4px #222;">Manhattan Company Building</div>
<div class="t" style="left:23.7px;top:661.0px;font-size:12.5px;color:#222;letter-spacing:0.103px;">Wall Street</div>
<div class="t" style="left:23.7px;top:678.0px;font-size:12.5px;color:#222;letter-spacing:0.239px;">555-4444</div>
<div class="t" style="left:23.7px;top:696.0px;font-size:12.8px;color:#222;letter-spacing:0.432px;-webkit-text-stroke:0.4px #222;">Municipal Building</div>
<div class="t" style="left:23.7px;top:713.0px;font-size:12.5px;color:#222;letter-spacing:0.096px;">Centre Street</div>
<div class="t" style="left:23.7px;top:730.0px;font-size:12.5px;color:#222;letter-spacing:0.502px;">111-0000</div>
<div class="t" style="left:23.7px;top:749.0px;font-size:12.8px;color:#222;letter-spacing:0.081px;-webkit-text-stroke:0.4px #222;">New York Savings Bank</div>
<div class="t" style="left:23.7px;top:767.0px;font-size:12.5px;color:#222;letter-spacing:0.214px;">W 14th Street</div>
</body>
</html>
